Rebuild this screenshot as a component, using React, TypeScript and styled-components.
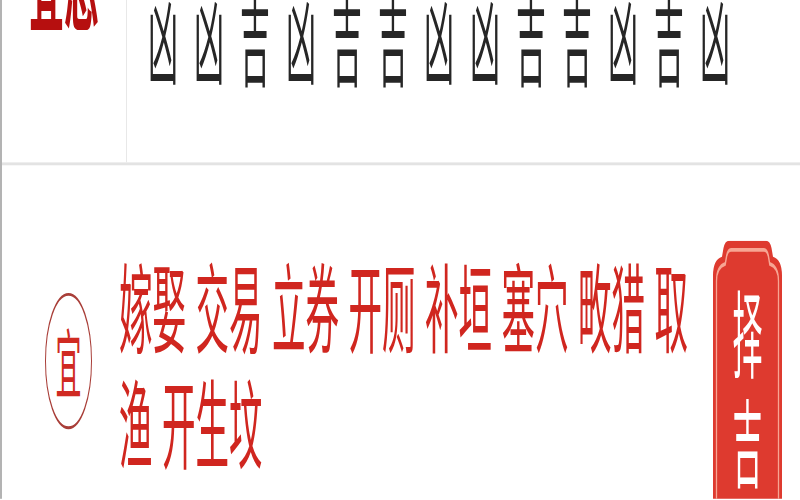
import React from "react";
import styled, { createGlobalStyle } from "styled-components";

const K = 2.9;

const Global = createGlobalStyle`
  html, body { margin: 0; padding: 0; background: #ffffff; overflow: hidden; }
  #root { width: 800px; height: 500px; overflow: hidden; }
`;

const Viewport = styled.div`
  width: 800px;
  height: 500px;
  overflow: hidden;
  background: #ffffff;
`;

const Stage = styled.div`
  width: 800px;
  height: ${500 / K}px;
  box-sizing: border-box;
  border-left: 2px solid #b3b3b3;
  transform: scale(1, ${K});
  transform-origin: 0 0;
  overflow: hidden;
  font-family: "Noto Sans CJK SC", "Noto Sans", sans-serif;
  display: flex;
  flex-direction: column;
`;

const TopSection = styled.div`
  display: flex;
  height: 56px;
  flex: none;
  border-bottom: 1px solid #e3e3e3;
`;

const LabelCell = styled.div`
  width: 124px;
  flex: none;
  border-right: 1px solid #e8e8e8;
  display: flex;
  justify-content: center;
  align-items: flex-start;
`;

const Label = styled.div`
  font-size: 35px;
  line-height: 35px;
  font-weight: 700;
  color: #b60f0f;
  margin-top: -24.6px;
  white-space: nowrap;
`;

const FortuneRow = styled.div`
  display: flex;
  gap: 16px;
  padding-left: 21px;
  align-items: flex-start;
  transform: scaleY(1.12);
  transform-origin: 0 0;
`;

const Fortune = styled.span`
  font-size: 30px;
  line-height: 30px;
  width: 30px;
  color: #262626;
  margin-top: -3.7px;
`;

const BottomSection = styled.div`
  display: flex;
  align-items: flex-start;
  padding-left: 43px;
  padding-top: 25.8px;
  flex: 1;
`;

const Badge = styled.div`
  width: 47px;
  height: 47px;
  box-sizing: border-box;
  flex: none;
  border: 1.4px solid #a93f39;
  border-radius: 50%;
  display: flex;
  align-items: center;
  justify-content: center;
  margin-top: 18.7px;
  font-size: 26px;
  line-height: 26px;
  color: #d02a22;
`;

const BadgeChar = styled.span`
  margin-top: -1.5px;
`;

const Items = styled.div`
  flex: 1;
  margin-left: 27px;
  margin-top: 2.2px;
  font-size: 33.5px;
  line-height: 39.7px;
  color: #d0261f;
  word-spacing: 2px;
`;

const PickButton = styled.div`
  position: relative;
  flex: none;
  width: 69px;
  height: 100px;
  margin-left: 13px;
  margin-right: 18px;
  box-sizing: border-box;
  padding-top: 12px;
`;

const ButtonShape = styled.svg`
  position: absolute;
  left: 0;
  top: 0;
  width: 69px;
  height: 100px;
  z-index: 0;
`;

const ButtonLabel = styled.div`
  position: relative;
  z-index: 1;
  display: flex;
  flex-direction: column;
  align-items: center;
  transform: scaleY(1.1);
  transform-origin: 50% 0;
`;

const ButtonChar = styled.span`
  color: #ffffff;
  font-size: 30px;
  line-height: 34.2px;
  height: 34.2px;
`;

const fortunes = ["凶", "凶", "吉", "凶", "吉", "吉", "凶", "凶", "吉", "吉", "凶", "吉", "凶"];

export default function App() {
  return (
    <>
      <Global />
      <Viewport>
        <Stage>
          <TopSection>
            <LabelCell>
              <Label>宜忌</Label>
            </LabelCell>
            <FortuneRow>
              {fortunes.map((f, i) => (
                <Fortune key={i}>{f}</Fortune>
              ))}
            </FortuneRow>
          </TopSection>
          <BottomSection>
            <Badge>
              <BadgeChar>宜</BadgeChar>
            </Badge>
            <Items>嫁娶 交易 立券 开厕 补垣 塞穴 畋猎 取渔 开生坟</Items>
            <PickButton>
              <ButtonShape viewBox="0 0 69 100" preserveAspectRatio="none">
                <path
                  d="M16,0 H53 Q57,0 58.5,2.5 L60,5.5 Q69,6.5 69,12 V100 H0 V12 Q0,6.5 9,5.5 L10.5,2.5 Q12,0 16,0 Z"
                  fill="#de3a2f"
                />
                <path
                  d="M3.5,100 V14 Q3.5,9 12.3,8 L13.6,5.3 Q15,3.2 18,3.2 H51 Q54,3.2 55.4,5.3 L56.7,8 Q65.5,9 65.5,14 V100"
                  fill="none"
                  stroke="#f7a593"
                  strokeWidth="1.3"
                />
              </ButtonShape>
              <ButtonLabel>
                <ButtonChar>择</ButtonChar>
                <ButtonChar>吉</ButtonChar>
              </ButtonLabel>
            </PickButton>
          </BottomSection>
        </Stage>
      </Viewport>
    </>
  );
}
